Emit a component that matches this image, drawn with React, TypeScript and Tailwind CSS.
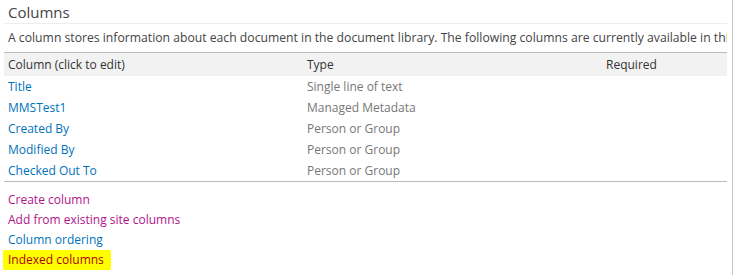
const rows = [
  { name: 'Title', type: 'Single line of text' },
  { name: 'MMSTest1', type: 'Managed Metadata' },
  { name: 'Created By', type: 'Person or Group' },
  { name: 'Modified By', type: 'Person or Group' },
  { name: 'Checked Out To', type: 'Person or Group' },
]

const links: { label: string; visited?: boolean; marked?: boolean }[] = [
  { label: 'Create column', visited: true },
  { label: 'Add from existing site columns', visited: true },
  { label: 'Column ordering' },
  { label: 'Indexed columns', marked: true },
]

export default function App() {
  return (
    <div className="flex h-[275px] w-[733px] overflow-hidden bg-white font-['Open_Sans',sans-serif] text-[12px]">
      <div className="min-w-0 flex-1 pl-[4px] pr-[5px]">
        {/* Section title */}
        <div className="flex h-[24px] items-center border-b border-[#ededed] pl-[4px] pt-[1px] text-[15px] text-[#444]">
          Columns
        </div>
        <p className="flex h-[28px] items-center overflow-hidden whitespace-nowrap pl-[4px] text-[12.2px] text-[#444]">
          A column stores information about each document in the document library. The following columns are currently available in this document library:
        </p>

        {/* Columns table */}
        <div className="border-y border-[#b6bcc6]">
          <div className="grid h-[23px] grid-cols-[299px_299px_1fr] items-center bg-[#f2f2f2] pl-[4px] text-[#333]">
            <span>Column (click to edit)</span>
            <span>Type</span>
            <span>Required</span>
          </div>
          {rows.map((r) => (
            <div key={r.name} className="grid h-[21px] grid-cols-[299px_299px_1fr] items-center pl-[4px]">
              <a className="text-[#0072bc]">{r.name}</a>
              <span className="text-[#777]">{r.type}</span>
              <span />
            </div>
          ))}
        </div>

        {/* Related actions */}
        <ul className="flex flex-col pt-[8px]">
          {links.map((l) => (
            <li key={l.label} className="flex h-[20px] items-center">
              {l.marked ? (
                <span className="-ml-px rounded-[2px] bg-[#ffff00] py-[1px] pl-[5px] pr-[7px] text-[#b00000]">
                  {l.label}
                </span>
              ) : (
                <a className={`pl-[4px] ${l.visited ? 'text-[#b0148a]' : 'text-[#0072bc]'}`}>{l.label}</a>
              )}
            </li>
          ))}
        </ul>
      </div>
      <div className="w-px shrink-0 bg-[#c4c4c4]" />
    </div>
  )
}
